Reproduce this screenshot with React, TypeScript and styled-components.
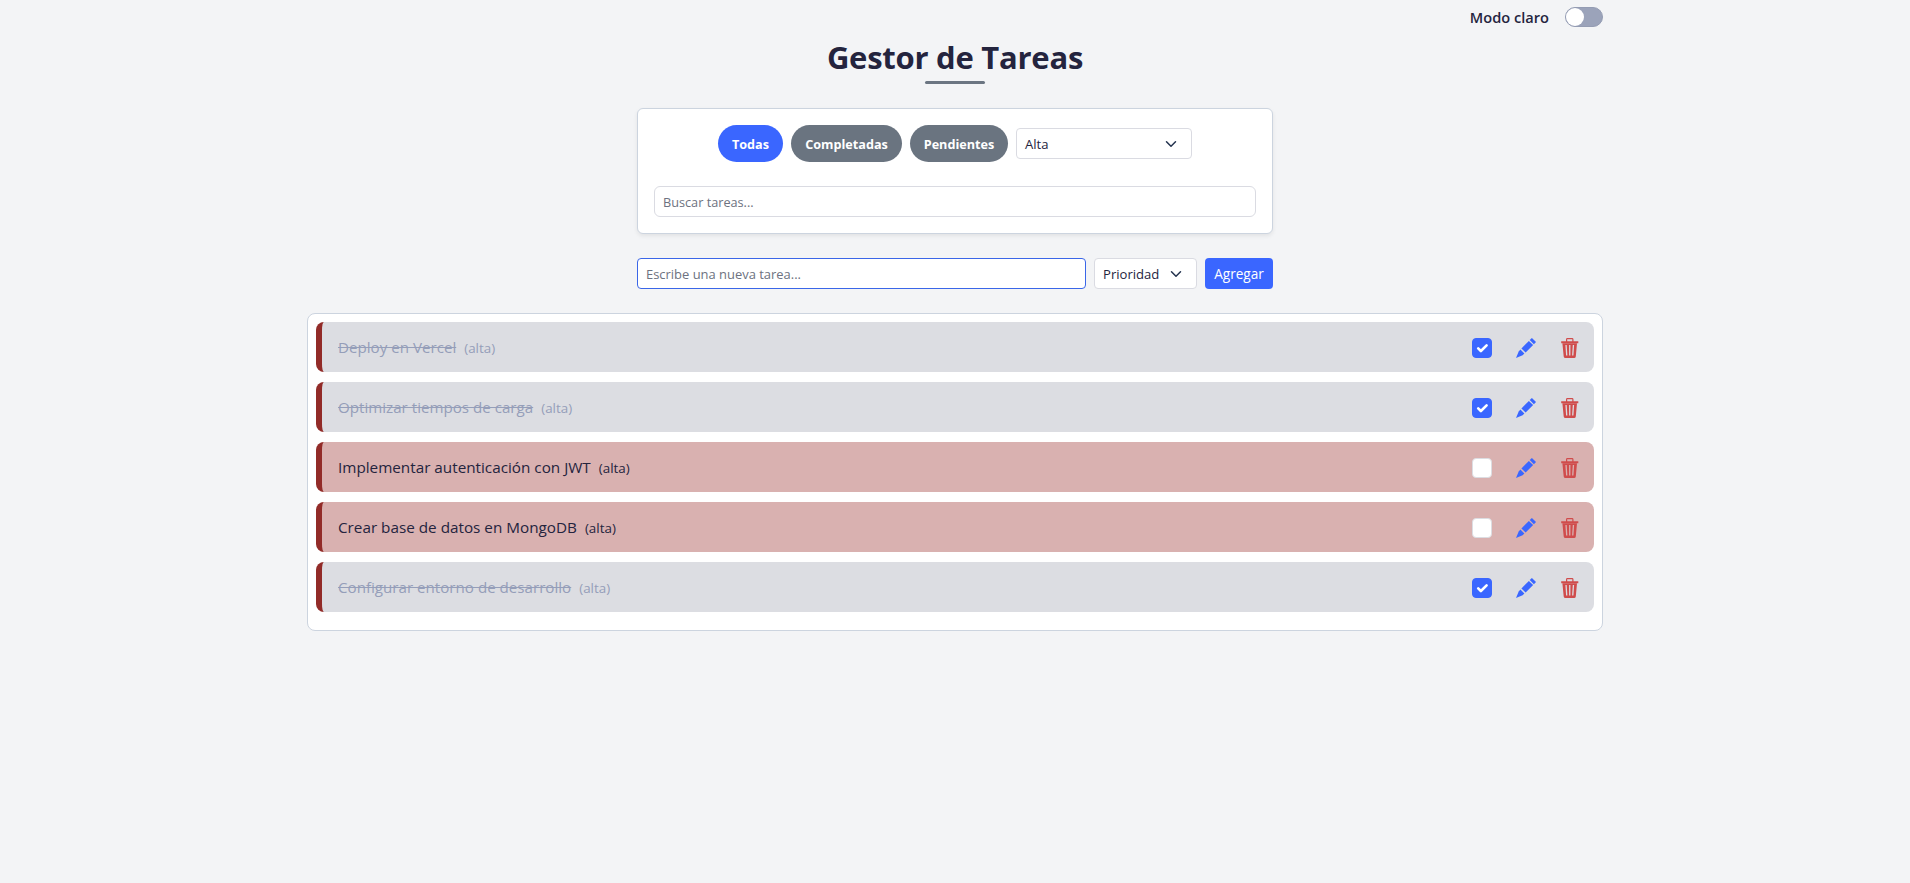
import React, { useState } from 'react';
import styled, { createGlobalStyle } from 'styled-components';

const GlobalStyle = createGlobalStyle`
  *, *::before, *::after { box-sizing: border-box; }
  body {
    margin: 0;
    min-height: 100vh;
    background: #f3f4f6;
    color: #24243e;
    font-family: "Open Sans", "Noto Sans", sans-serif;
  }
  button, input { font-family: inherit; }
`;

const Page = styled.main`
  width: 1296px;
  margin: 0 auto;
  display: flex;
  flex-direction: column;
  align-items: center;
`;

const ThemeBar = styled.div`
  align-self: stretch;
  height: 34px;
  display: flex;
  justify-content: flex-end;
  align-items: center;
  gap: 16px;
`;

const ThemeLabel = styled.span`
  font-size: 14.6px;
  font-weight: 600;
  line-height: 20px;
  margin-bottom: 1px;
`;

const Toggle = styled.button`
  width: 38px;
  height: 20px;
  padding: 0;
  border: 1px solid #949cb3;
  border-radius: 10px;
  background: #9ba3ba;
  display: flex;
  align-items: center;
`;

const Knob = styled.span`
  width: 18px;
  height: 18px;
  border-radius: 50%;
  background: #fff;
`;

const Title = styled.h1`
  margin: 4px 0 24px;
  height: 46px;
  display: flex;
  flex-direction: column;
  align-items: center;
  justify-content: space-between;
  font-size: 31px;
  font-weight: 700;
  line-height: 38px;
  letter-spacing: -0.25px;
  white-space: nowrap;

  &::after {
    content: "";
    width: 60px;
    height: 3px;
    border-radius: 2px;
    background: #6b7582;
  }
`;

const FilterCard = styled.section`
  width: 636px;
  height: 126px;
  padding: 16px;
  border: 1px solid #ccd4df;
  border-radius: 6px;
  background: #fff;
  box-shadow: 0 2px 4px rgba(0, 0, 0, 0.075);
`;

const FilterRow = styled.div`
  height: 37px;
  margin-bottom: 24px;
  display: flex;
  justify-content: center;
  align-items: center;
  gap: 8px;
`;

const Pill = styled.button<{ $active?: boolean; $width: number }>`
  width: ${p => p.$width}px;
  height: 37px;
  padding: 0;
  border: 0;
  border-radius: 19px;
  background: ${p => (p.$active ? '#3a66ff' : '#6a7480')};
  color: #fff;
  font-size: 12.65px;
  font-weight: 700;
  line-height: 20px;
`;

const Select = styled.button<{ $width: number }>`
  width: ${p => p.$width}px;
  height: 31px;
  padding: 0 14px 0 8px;
  border: 1px solid #dadbe2;
  border-radius: 4px;
  background: #fff;
  color: #24243e;
  display: flex;
  align-items: center;
  justify-content: space-between;
  font-size: 13.1px;
  line-height: 20px;
`;

const TextInput = styled.input<{ $focused?: boolean }>`
  width: ${p => (p.$focused ? '449px' : '100%')};
  height: 31px;
  padding: 0 8px;
  border: 1px solid ${p => (p.$focused ? '#3a66e8' : '#dadbe2')};
  border-radius: ${p => (p.$focused ? 4 : 6)}px;
  background: #fff;
  color: #24243e;
  outline: none;
  font-size: ${p => (p.$focused ? 12.95 : 12.7)}px;

  &::placeholder { color: #6d7280; opacity: 1; }
`;

const TaskForm = styled.form`
  width: 636px;
  height: 31px;
  margin: 24px 0;
  display: flex;
  gap: 8px;
`;

const AddButton = styled.button`
  width: 68px;
  height: 31px;
  padding: 0;
  border: 0;
  border-radius: 4px;
  background: #3a66ff;
  color: #fff;
  font-size: 13.6px;
  line-height: 20px;
`;

const TaskList = styled.ul`
  width: 1296px;
  height: 318px;
  margin: 0;
  padding: 8px;
  border: 1px solid #ccd4df;
  border-radius: 8px;
  background: #fff;
  list-style: none;
  display: flex;
  flex-direction: column;
  gap: 10px;
`;

const TaskItem = styled.li<{ $done: boolean }>`
  height: 50px;
  padding: 0 14px 0 16px;
  border-left: 6px solid #922b28;
  border-radius: 8px;
  background: ${p => (p.$done ? '#dcdde2' : '#d9b1b0')};
  color: ${p => (p.$done ? '#959eb9' : '#24243e')};
  display: flex;
  align-items: center;
  justify-content: space-between;
`;

const TaskText = styled.div`
  display: flex;
  align-items: baseline;
  gap: 8px;
  line-height: 24px;
`;

const TaskName = styled.span<{ $done: boolean }>`
  font-size: ${p => (p.$done ? 15.15 : 15.27)}px;
  text-decoration: ${p => (p.$done ? 'line-through' : 'none')};
`;

const Priority = styled.span`
  font-size: 13.4px;
`;

const Actions = styled.div`
  display: flex;
  align-items: center;
  gap: 24px;
  padding-top: 2px;
`;

const Checkbox = styled.button<{ $done: boolean }>`
  width: 20px;
  height: 20px;
  padding: 0;
  border: 1px solid ${p => (p.$done ? '#3a66ff' : '#dcdde2')};
  border-radius: 4px;
  background: ${p => (p.$done ? '#3a66ff' : '#fff')};
  display: block;

  svg { display: block; }
`;

const IconButton = styled.button<{ $color: string }>`
  width: 20px;
  height: 20px;
  padding: 0;
  border: 0;
  background: none;
  color: ${p => p.$color};
  display: flex;
`;

const Chevron = () => (
  <svg width="12" height="12" viewBox="0 0 16 16" fill="none" stroke="#24334f" strokeWidth="2" strokeLinecap="round" strokeLinejoin="round">
    <path d="m2 5 6 6 6-6" />
  </svg>
);

const Check = () => (
  <svg width="18" height="18" viewBox="0 0 18 18" fill="none" stroke="#fff" strokeWidth="2.6" strokeLinecap="round" strokeLinejoin="round">
    <path d="m5.2 9.3 2.7 2.7 5.7-5.7" />
  </svg>
);

const Pencil = () => (
  <svg width="20" height="20" viewBox="0 0 20 20" fill="currentColor">
    <path d="M15.9 0 20 4.1 17.9 6.3 13.7 2.1Z" />
    <path d="M12.9 2.9 17.1 7.1 9.6 14.6 5.4 10.4Z" />
    <path d="M4.4 11.6 8.4 15.6 6.6 17.3 0 20 2.7 13.4Z" />
  </svg>
);

const Trash = () => (
  <svg width="20" height="20" viewBox="0 0 20 20" fill="currentColor">
    <path d="M6 3.2V1.4Q6 0 7.4 0H12.1Q13.5 0 13.5 1.4V3.2H18.3V5.2H1.2V3.2ZM7.2 3.2H12.3V1.2H7.2Z" fillRule="evenodd" />
    <path d="M2.4 5.2H17L15.8 18.4Q15.6 20 14.1 20H5.4Q3.9 20 3.7 18.4ZM5.4 7 6.1 17.6H7.4L6.7 7ZM9.1 7V17.6H10.4V7ZM12.8 7 12.1 17.6H13.4L14.1 7Z" fillRule="evenodd" />
  </svg>
);

const initialTasks = [
  { name: 'Deploy en Vercel', done: true },
  { name: 'Optimizar tiempos de carga', done: true },
  { name: 'Implementar autenticación con JWT', done: false },
  { name: 'Crear base de datos en MongoDB', done: false },
  { name: 'Configurar entorno de desarrollo', done: true },
];

export default function App() {
  const [tasks, setTasks] = useState(initialTasks);
  const toggle = (name: string) =>
    setTasks(list => list.map(t => (t.name === name ? { ...t, done: !t.done } : t)));

  return (
    <Page>
      <GlobalStyle />
      <ThemeBar>
        <ThemeLabel>Modo claro</ThemeLabel>
        <Toggle><Knob /></Toggle>
      </ThemeBar>
      <Title>Gestor de Tareas</Title>
      <FilterCard>
        <FilterRow>
          <Pill $active $width={65}>Todas</Pill>
          <Pill $width={111}>Completadas</Pill>
          <Pill $width={98}>Pendientes</Pill>
          <Select $width={176}>Alta<Chevron /></Select>
        </FilterRow>
        <TextInput placeholder="Buscar tareas..." />
      </FilterCard>
      <TaskForm onSubmit={e => e.preventDefault()}>
        <TextInput $focused placeholder="Escribe una nueva tarea..." />
        <Select type="button" $width={103}>Prioridad<Chevron /></Select>
        <AddButton>Agregar</AddButton>
      </TaskForm>
      <TaskList>
        {tasks.map(t => (
          <TaskItem key={t.name} $done={t.done}>
            <TaskText>
              <TaskName $done={t.done}>{t.name}</TaskName>
              <Priority>(alta)</Priority>
            </TaskText>
            <Actions>
              <Checkbox $done={t.done} onClick={() => toggle(t.name)}>{t.done && <Check />}</Checkbox>
              <IconButton $color="#3a66ff"><Pencil /></IconButton>
              <IconButton $color="#d04c4c"><Trash /></IconButton>
            </Actions>
          </TaskItem>
        ))}
      </TaskList>
    </Page>
  );
}
